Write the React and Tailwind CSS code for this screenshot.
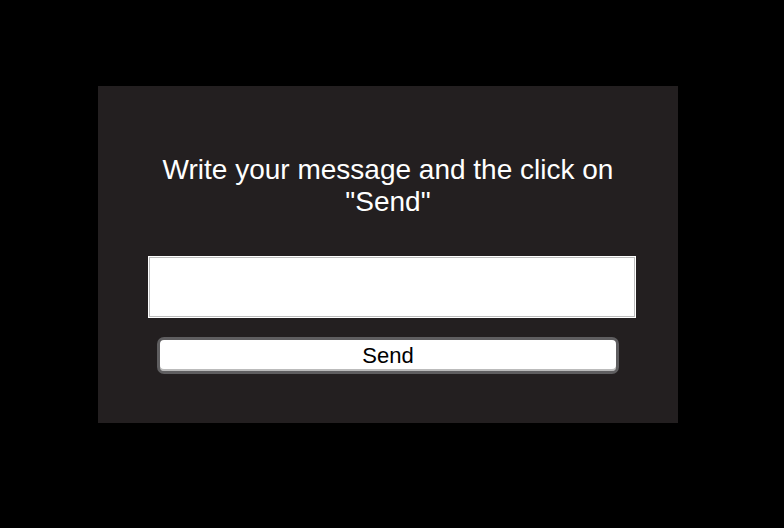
import React from 'react';

export default function App() {
  return (
    <div className="w-[784px] h-[528px] bg-black pl-[98px] pt-[86px]" style={{ fontFamily: '"Liberation Sans", Arial, sans-serif' }}>
      <div className="w-[580px] h-[337px] bg-[#231f20] flex flex-col items-center pt-[68px]">
        <h1 className="text-[28px] leading-[32px] text-white text-center font-normal">
          Write your message and the click on
          <br />
          "Send"
        </h1>
        <textarea className="mt-[39px] ml-[8px] w-[486px] h-[60px] bg-white border border-[#bdbdbd] ring-1 ring-white resize-none outline-none" />
        <button className="mt-[20px] w-[462px] h-[37px] bg-white border-[3px] border-[#5f5e60] rounded-[7px] text-[22px] leading-none text-black shadow-[inset_0_-2px_0_#bbb]">
          Send
        </button>
      </div>
    </div>
  );
}
